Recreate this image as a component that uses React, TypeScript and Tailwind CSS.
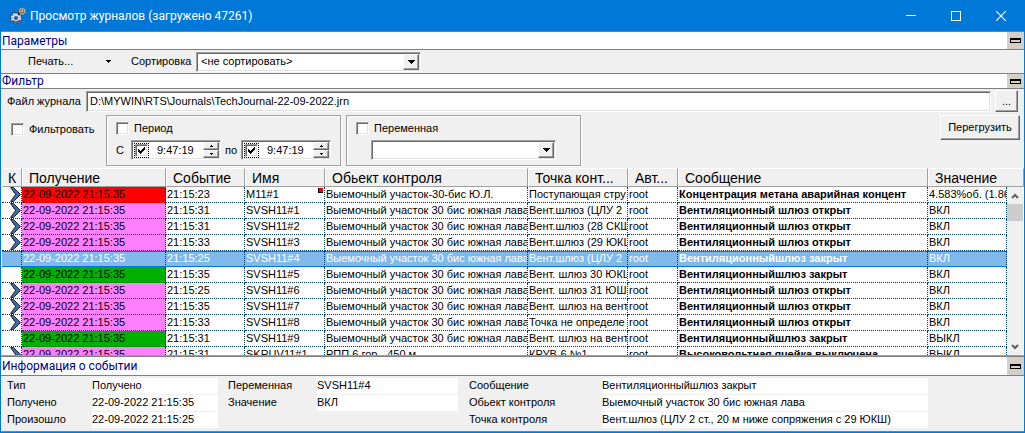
import React, { useState } from 'react';

type Level = 'alarm' | 'notice' | 'normal';

interface JournalRow {
  id: number;
  marked: boolean;
  level: Level;
  received: string;
  time: string;
  name: string;
  object: string;
  point: string;
  author: string;
  message: string;
  value: string;
  flag?: boolean;
}

const LAVA = 'Выемочный участок 30 бис южная лава';
const OPENED = 'Вентиляционный шлюз открыт';
const CLOSED = 'Вентиляционныйшлюз закрыт';
const RECEIVED = '22-09-2022 21:15:35';

const rows: JournalRow[] = [
  { id: 1, marked: true, level: 'alarm', received: RECEIVED, time: '21:15:23', name: 'M11#1', object: 'Выемочный участок-30-бис Ю.Л.', point: 'Поступающая стру', author: 'root', message: 'Концентрация метана аварийная концент', value: '4.583%об. (1.86', flag: true },
  { id: 2, marked: true, level: 'notice', received: RECEIVED, time: '21:15:31', name: 'SVSH11#1', object: LAVA, point: 'Вент.шлюз (ЦЛУ 2', author: 'root', message: OPENED, value: 'ВКЛ' },
  { id: 3, marked: true, level: 'notice', received: RECEIVED, time: '21:15:31', name: 'SVSH11#2', object: LAVA, point: 'Вент.шлюз (28 СКШ', author: 'root', message: OPENED, value: 'ВКЛ' },
  { id: 4, marked: true, level: 'notice', received: RECEIVED, time: '21:15:33', name: 'SVSH11#3', object: LAVA, point: 'Вент.шлюз (29 ЮКШ', author: 'root', message: OPENED, value: 'ВКЛ' },
  { id: 5, marked: false, level: 'notice', received: RECEIVED, time: '21:15:25', name: 'SVSH11#4', object: LAVA, point: 'Вент.шлюз (ЦЛУ 2', author: 'root', message: CLOSED, value: 'ВКЛ' },
  { id: 6, marked: false, level: 'normal', received: RECEIVED, time: '21:15:35', name: 'SVSH11#5', object: LAVA, point: 'Вент. шлюз 30 ЮКШ', author: 'root', message: CLOSED, value: 'ВКЛ' },
  { id: 7, marked: true, level: 'notice', received: RECEIVED, time: '21:15:25', name: 'SVSH11#6', object: LAVA, point: 'Вент. шлюз 31 ЮШВ', author: 'root', message: OPENED, value: 'ВКЛ' },
  { id: 8, marked: true, level: 'notice', received: RECEIVED, time: '21:15:35', name: 'SVSH11#7', object: LAVA, point: 'Вент. шлюз на вент', author: 'root', message: OPENED, value: 'ВКЛ' },
  { id: 9, marked: true, level: 'notice', received: RECEIVED, time: '21:15:33', name: 'SVSH11#8', object: LAVA, point: 'Точка не определе', author: 'root', message: OPENED, value: 'ВКЛ' },
  { id: 10, marked: false, level: 'normal', received: RECEIVED, time: '21:15:31', name: 'SVSH11#9', object: LAVA, point: 'Вент. шлюз на вент', author: 'root', message: CLOSED, value: 'ВЫКЛ' },
  { id: 11, marked: true, level: 'notice', received: RECEIVED, time: '21:15:31', name: 'SKRUV11#1', object: 'РПП 6 гор. -450 м', point: 'КРУВ-6 №1', author: 'root', message: 'Высоковольтная ячейка выключена', value: 'ВЫКЛ' },
];

const levelClass: Record<Level, string> = {
  alarm: 'bg-[#ff0000]',
  notice: 'bg-[#ff80ff]',
  normal: 'bg-[#00b000]',
};

const sunken =
  'border border-t-[#a0a0a0] border-l-[#a0a0a0] border-r-white border-b-white bg-white shadow-[inset_1px_1px_0_#696969,inset_-1px_-1px_0_#e3e3e3]';
const raised =
  'border border-t-white border-l-white border-r-[#696969] border-b-[#696969] bg-[#f0f0f0] shadow-[inset_-1px_-1px_0_#a0a0a0]';

const GearIcon = () => (
  <svg viewBox="0 0 18 18" className="h-[18px] w-[18px]" aria-hidden="true">
    <circle cx="7" cy="11" r="4.6" fill="none" stroke="#33334a" strokeWidth="3.4" strokeDasharray="2.2 1.41" />
    <circle cx="7" cy="11" r="4.2" fill="none" stroke="#dcdce4" strokeWidth="2.4" strokeDasharray="2 1.3" />
    <circle cx="7" cy="11" r="3.1" fill="none" stroke="#d2d2da" strokeWidth="2.2" />
    <path d="M3.5 13.5a4.5 4.5 0 0 0 7 0" fill="none" stroke="#4a3b3b" strokeWidth="1.2" />
    <circle cx="7" cy="11" r="1.6" fill="#1a5fa8" />
    <path d="M9 7.5l2.5-2" stroke="#2b2420" strokeWidth="2.4" />
    <circle cx="13.3" cy="4.6" r="2.5" fill="#3a2a18" />
    <circle cx="13.3" cy="4.3" r="2.5" fill="none" stroke="#e3b878" strokeWidth="2" strokeDasharray="1.6 0.6" />
    <circle cx="13.3" cy="4.3" r="1" fill="#f7efdc" />
  </svg>
);

const ChevronMark = () => (
  <svg viewBox="0 0 11 15" className="ml-[7px] block h-[15px] w-[11px]" aria-hidden="true">
    <path d="M0.5 0.5h3l7 7-7 7h-3l5-7z" fill="#3a6cb0" stroke="#10131a" strokeWidth="0.9" />
  </svg>
);

const ArrowDown = () => (
  <svg viewBox="0 0 7 4" className="h-[4px] w-[7px]" aria-hidden="true" shapeRendering="crispEdges">
    <path d="M0 0h7v1h-1v1h-1v1h-1v1h-1v-1h-1v-1h-1v-1h-1z" fill="#000" />
  </svg>
);

const SmallArrow: React.FC<{ up?: boolean }> = ({ up }) => (
  <svg viewBox="0 0 3 2" className="h-[2px] w-[3px]" aria-hidden="true" shapeRendering="crispEdges">
    <path d={up ? 'M1 0h1v1h1v1h-3v-1h1z' : 'M0 0h3v1h-1v1h-1v-1h-1z'} fill="#000" />
  </svg>
);

interface SectionBarProps {
  title: string;
  className: string;
}

const SectionBar: React.FC<SectionBarProps> = ({ title, className }) => (
  <div className={`flex shrink-0 items-stretch border-y border-[#808080] bg-white ${className}`}>
    <h2 className="flex flex-1 items-center whitespace-nowrap pl-px font-['Roboto',sans-serif] text-[12px] leading-[14px] text-[#000090]">
      {title}
    </h2>
    <button type="button" aria-label={`Свернуть: ${title}`} className="flex w-[17px] items-center justify-center bg-[#d4d0c8]">
      <span className="h-[5px] w-[11px] border border-t-2 border-black bg-[#d4d0c8]" />
    </button>
  </div>
);

interface CheckProps {
  id: string;
  label?: string;
  defaultChecked?: boolean;
}

const Check: React.FC<CheckProps> = ({ id, label, defaultChecked }) => (
  <span className="grid h-[13px] w-[13px] shrink-0 place-items-center">
    <input
      id={id}
      type="checkbox"
      aria-label={label}
      defaultChecked={defaultChecked}
      className={`peer col-start-1 row-start-1 h-[13px] w-[13px] appearance-none ${sunken}`}
    />
    <svg viewBox="0 0 7 7" className="pointer-events-none invisible col-start-1 row-start-1 h-[7px] w-[7px] peer-checked:visible" shapeRendering="crispEdges">
      <path d="M0 2v3l2 2 5-5v-2l-5 4z" fill="#000" />
    </svg>
  </span>
);

interface ComboProps {
  id: string;
  label?: string;
  options: string[];
  className: string;
}

const Combo: React.FC<ComboProps> = ({ id, label, options, className }) => (
  <div className={`relative h-5 ${sunken} ${className}`}>
    <select id={id} aria-label={label} className="h-full w-full appearance-none bg-transparent pl-1 pr-5 outline-none">
      {options.map(o => (
        <option key={o}>{o}</option>
      ))}
    </select>
    <span className={`pointer-events-none absolute inset-y-px right-px flex w-4 items-center justify-center ${raised}`}>
      <ArrowDown />
    </span>
  </div>
);

const TimeBox: React.FC<{ id: string; label: string }> = ({ id, label }) => (
  <div className={`flex h-5 w-[90px] items-center p-px ${sunken}`}>
    <span className="ml-px border border-dotted border-black">
      <Check id={`${id}-on`} label={`${label}: включить`} defaultChecked />
    </span>
    <input id={id} aria-label={label} defaultValue="9:47:19" className="ml-2 w-0 flex-1 bg-transparent outline-none" />
    <span className="flex h-full w-4 flex-col">
      <button type="button" aria-label="Больше" className={`flex flex-1 items-center justify-center ${raised}`}>
        <SmallArrow up />
      </button>
      <button type="button" aria-label="Меньше" className={`flex flex-1 items-center justify-center ${raised}`}>
        <SmallArrow />
      </button>
    </span>
  </div>
);

const columns = ['К', 'Получение', 'Событие', 'Имя', 'Обьект контроля', 'Точка конт...', 'Авт...', 'Сообщение', 'Значение'];

const JournalTable: React.FC<{ selected: number; onSelect: (id: number) => void }> = ({ selected, onSelect }) => (
  <table className="w-full table-fixed border-separate border-spacing-0">
    <colgroup>
      <col className="w-[20px]" />
      <col className="w-[144px]" />
      <col className="w-[79px]" />
      <col className="w-[80px]" />
      <col className="w-[203px]" />
      <col className="w-[100px]" />
      <col className="w-[50px]" />
      <col />
      <col className="w-[79px]" />
      <col className="w-[17px]" />
    </colgroup>
    <thead>
      <tr>
        {columns.map((c, i) => (
          <th
            key={c}
            colSpan={i === 8 ? 2 : 1}
            className={`h-[19px] whitespace-nowrap border border-b-[#a0a0a0] border-l-white border-r-[#a0a0a0] border-t-white bg-[#f0f0f0] py-0 pr-0 text-left text-[14px] font-normal leading-4 ${i === 0 ? 'pl-[5px]' : 'pl-[6px]'}`}
          >
            {c}
          </th>
        ))}
      </tr>
    </thead>
    <tbody>
      {rows.map(row => {
        const active = row.id === selected;
        const cell = `h-4 overflow-hidden whitespace-nowrap p-0 pl-px leading-[15px] ${
          active
            ? 'border-b border-r border-b-[#0078d7] border-r-[#003c74] [border-right-style:dotted] bg-[#80b9eb] text-white shadow-[inset_0_1px_0_#0078d7]'
            : 'border-b border-r border-dotted border-[#003c74]'
        }`;
        return (
          <tr key={row.id} onClick={() => onSelect(row.id)}>
            <td className={cell}>{row.marked && <ChevronMark />}</td>
            <td className={`${cell} ${active ? '' : levelClass[row.level]}`}>{row.received}</td>
            <td className={cell}>{row.time}</td>
            <td className={`${cell} relative`}>
              {row.name}
              {row.flag && <span className="absolute right-px top-px h-[5px] w-[5px] border-b border-l border-black bg-[#ff0000]" />}
            </td>
            <td className={cell}>{row.object}</td>
            <td className={cell}>{row.point}</td>
            <td className={cell}>{row.author}</td>
            <td className={`${cell} font-bold`}>{row.message}</td>
            <td className={cell}>{row.value}</td>
            <td className="p-0" />
          </tr>
        );
      })}
    </tbody>
  </table>
);

const InfoField: React.FC<{ label: string; value: string }> = ({ label, value }) => (
  <>
    <dt className="h-4 leading-[14px]">{label}</dt>
    <dd className="h-4 truncate bg-white leading-[14px]">{value}</dd>
  </>
);

const App: React.FC = () => {
  const [selected, setSelected] = useState(5);

  return (
    <div className="flex h-screen flex-col overflow-hidden border border-t-0 border-[#0078d7] bg-[#f0f0f0] font-['Liberation_Sans',Arial,sans-serif] text-[11px] text-black">
      <header className="flex h-[31px] shrink-0 items-center bg-[#0078d7] pl-2 text-white">
        <GearIcon />
        <h1 className="ml-[3px] flex-1 font-['Roboto',sans-serif] text-[12px]">Просмотр журналов (загружено 47261)</h1>
        <button type="button" aria-label="Свернуть" className="flex h-full w-[45px] items-center justify-center">
          <span className="h-px w-[10px] bg-white" />
        </button>
        <button type="button" aria-label="Развернуть" className="flex h-full w-[45px] items-center justify-center">
          <span className="h-[10px] w-[10px] border border-white" />
        </button>
        <button type="button" aria-label="Закрыть" className="flex h-full w-[46px] items-center justify-center">
          <svg viewBox="0 0 10 10" className="h-[10px] w-[10px]">
            <path d="M0 0l10 10M10 0L0 10" stroke="#fff" strokeWidth="1.1" />
          </svg>
        </button>
      </header>

      <SectionBar title="Параметры" className="h-[19px]" />
      <div className="flex h-[23px] shrink-0 items-center">
        <button type="button" className="ml-[27px] flex w-[83px] items-center justify-between">
          Печать...
          <svg viewBox="0 0 5 3" className="h-[3px] w-[5px]" shapeRendering="crispEdges">
            <path d="M0 0h5v1h-1v1h-1v1h-1v-1h-1v-1h-1z" fill="#000" />
          </svg>
        </button>
        <label htmlFor="sort" className="ml-5 w-[65px]">Сортировка</label>
        <Combo id="sort" options={['<не сортировать>']} className="w-[225px]" />
      </div>

      <SectionBar title="Фильтр" className="h-[16px]" />
      <div className="shrink-0 pb-[2px] pt-px">
        <div className="flex items-center">
          <label htmlFor="file" className="w-[85px] pl-[6px]">Файл журнала</label>
          <input id="file" defaultValue="D:\MYWIN\RTS\Journals\TechJournal-22-09-2022.jrn" className={`h-[21px] min-w-0 flex-1 px-[3px] outline-none ${sunken}`} />
          <button type="button" aria-label="Выбрать файл" className={`ml-1 mr-[6px] h-[22px] w-[23px] ${raised}`}>...</button>
        </div>
        <div className="mt-[3px] flex items-start">
          <div className="mt-[6px] flex w-[95px] items-center gap-[5px] pl-[10px]">
            <Check id="filter" />
            <label htmlFor="filter">Фильтровать</label>
          </div>
          <fieldset className="ml-[10px] h-[51px] w-[235px] border border-[#a0a0a0] pl-[9px] pt-[6px] shadow-[1px_1px_0_#fff,inset_1px_1px_0_#fff]">
            <div className="flex h-[13px] items-center gap-[5px]">
              <Check id="period" />
              <label htmlFor="period">Период</label>
            </div>
            <div className="mt-[5px] flex items-center">
              <label htmlFor="from" className="w-[15px]">С</label>
              <TimeBox id="from" label="С" />
              <label htmlFor="to" className="w-5 text-center">по</label>
              <TimeBox id="to" label="По" />
            </div>
          </fieldset>
          <fieldset className="ml-[5px] h-[51px] w-[235px] border border-[#a0a0a0] pl-[9px] pt-[6px] shadow-[1px_1px_0_#fff,inset_1px_1px_0_#fff]">
            <div className="flex h-[13px] items-center gap-[5px]">
              <Check id="variable" />
              <label htmlFor="variable">Переменная</label>
            </div>
            <Combo id="variable-name" label="Имя переменной" options={['']} className="ml-[15px] mt-[5px] w-[185px]" />
          </fieldset>
          <button type="button" className={`ml-auto mr-1 h-[25px] w-20 whitespace-nowrap ${raised}`}>Перегрузить</button>
        </div>
      </div>

      <main className="relative min-h-0 flex-1 overflow-hidden border-l border-[#f0f0f0] bg-white">
        <JournalTable selected={selected} onSelect={setSelected} />
        <div className="absolute bottom-0 right-px top-[19px] flex w-4 flex-col items-center bg-[#f0f0f0]">
          <button type="button" aria-label="Вверх" className="flex h-[17px] w-full items-center justify-center">
            <svg viewBox="0 0 8 6" className="h-[6px] w-2"><path d="M1 5l3-3 3 3" fill="none" stroke="#606060" strokeWidth="2" /></svg>
          </button>
          <div className="h-[17px] w-full bg-[#cdcdcd]" />
          <button type="button" aria-label="Вниз" className="mt-auto flex h-[17px] w-full items-center justify-center">
            <svg viewBox="0 0 8 6" className="h-[6px] w-2"><path d="M1 1l3 3 3-3" fill="none" stroke="#606060" strokeWidth="2" /></svg>
          </button>
        </div>
      </main>

      <div className="h-px shrink-0 bg-[#a0a0a0]" />
      <SectionBar title="Информация о событии" className="h-5" />
      <div className="flex shrink-0 border-b border-[#808080] pb-[3px] pl-[6px] pt-[2px]">
        <dl className="grid grid-cols-[85px_126px] content-start gap-y-px">
          <InfoField label="Тип" value="Получено" />
          <InfoField label="Получено" value="22-09-2022 21:15:35" />
          <InfoField label="Произошло" value="22-09-2022 21:15:25" />
        </dl>
        <dl className="ml-[10px] grid grid-cols-[89px_141px] content-start gap-y-px">
          <InfoField label="Переменная" value="SVSH11#4" />
          <InfoField label="Значение" value="ВКЛ" />
        </dl>
        <dl className="ml-[11px] grid grid-cols-[133px_326px] content-start gap-y-px">
          <InfoField label="Сообщение" value="Вентиляционныйшлюз закрыт" />
          <InfoField label="Обьект контроля" value="Выемочный участок 30 бис южная лава" />
          <InfoField label="Точка контроля" value="Вент.шлюз (ЦЛУ 2 ст., 20 м ниже сопряжения с 29 ЮКШ)" />
        </dl>
      </div>
    </div>
  );
};

export default App;
